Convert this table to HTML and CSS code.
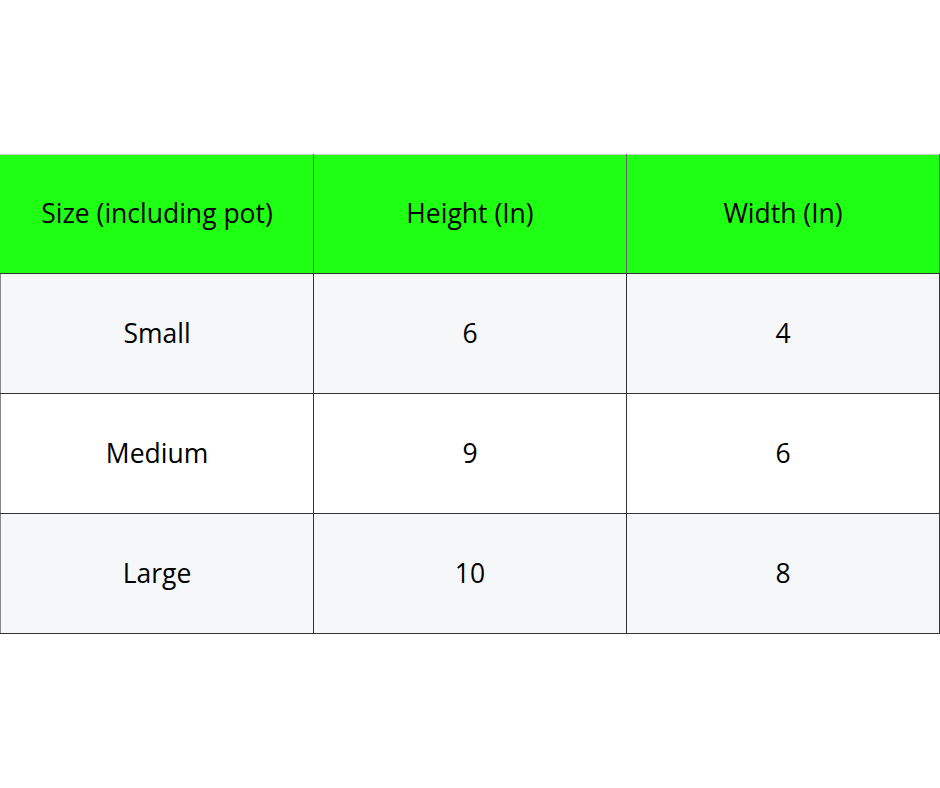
FILE: index.html
```html
<!DOCTYPE html>
<html>
<head>
<meta charset="utf-8">
<link rel="stylesheet" href="styles.css">
</head>
<body>
<main class="page">
  <table class="sizes">
    <thead>
      <tr>
        <th>Size (including pot)</th>
        <th>Height (In)</th>
        <th>Width (In)</th>
      </tr>
    </thead>
    <tbody>
      <tr class="alt"><td>Small</td><td>6</td><td>4</td></tr>
      <tr><td>Medium</td><td>9</td><td>6</td></tr>
      <tr class="alt"><td>Large</td><td>10</td><td>8</td></tr>
    </tbody>
  </table>
</main>
</body>
</html>
```

FILE: styles.css
```css
html, body {
  margin: 0;
  padding: 0;
  background: #ffffff;
}

.page {
  padding-top: 154px;
  font-family: "Open Sans", "Liberation Sans", sans-serif;
}

.sizes {
  width: 940px;
  border-collapse: collapse;
  table-layout: fixed;
  font-size: 26.5px;
  line-height: 1.2;
  color: #000000;
}

.sizes th,
.sizes td {
  padding: 0;
  box-sizing: border-box;
  text-align: center;
  vertical-align: middle;
  font-weight: 400;
  border: 1px solid #333333;
}

.sizes th {
  height: 119px;
  background: #1fff14;
  border-top-color: #cccccc;
  border-left-color: #666666;
  border-right-color: #666666;
}

.sizes td {
  height: 120px;
}

.sizes th:first-child {
  border-left-color: #1fff14;
}

.sizes td:first-child {
  border-left-color: #888888;
}

.sizes tbody tr {
  background: #ffffff;
}

.sizes tbody tr.alt {
  background: #f6f7f9;
}
```
